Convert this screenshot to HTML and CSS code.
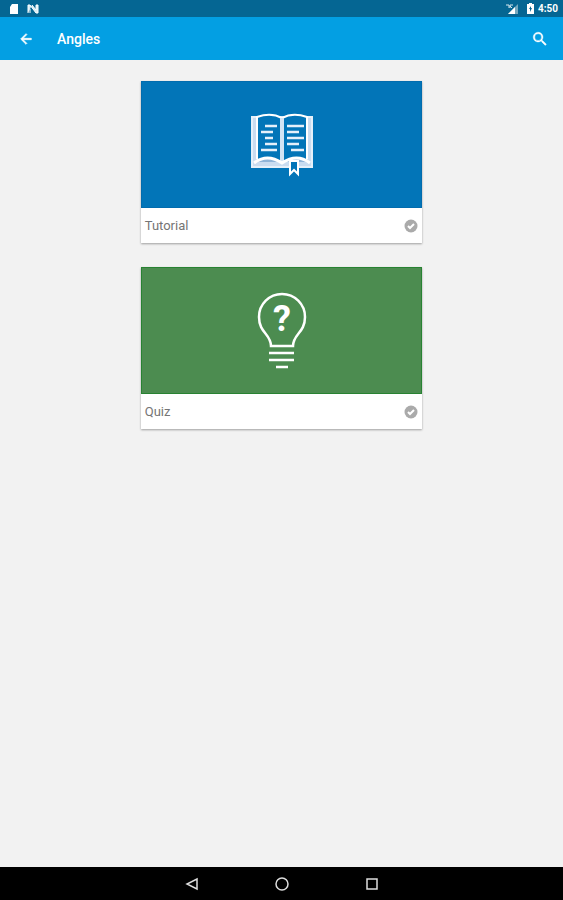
FILE: index.html
```html
<!DOCTYPE html>
<html lang="en">
<head>
    <meta charset="UTF-8">
    <meta name="viewport" content="width=device-width, initial-scale=1.0">
    <title>Angles</title>
    <link rel="stylesheet" href="styles.css">
</head>
<body>
    <div class="status-bar">
        <svg width="10" height="10" viewBox="0 0 10 10"><path d="M3 0h6v10H1V3z" fill="#fff"/></svg>
        <svg width="12" height="10" viewBox="0 0 12 10"><path d="M1 9V1h2l6 8h2V1H9v5L5 1M3 9V5" fill="#d9edf5" stroke="#fff"/></svg>
        <svg class="signal" width="13" height="12" viewBox="0 0 13 12"><path d="M0 2h3v3M4 5V2h3M6 5l-2-2" fill="none" stroke="#d5e6ed"/><path d="M12 1v10H2z" fill="#75a8be"/><path d="M9 4v7H2z" fill="#fff"/></svg>
        <svg width="7" height="11" viewBox="0 0 7 11"><path d="M2 0h3v1h2v10H0V1h2z" fill="#fff"/><path d="M4 3L2 6h1v3l2-4H4z" fill="#056693"/></svg>
        <span class="clock">4:50</span>
    </div>
    <header class="app-bar">
        <button class="icon-button" aria-label="Back">
            <svg width="16" height="16" viewBox="0 0 24 24"><path d="M20 11H7.8l5.6-5.6L12 4l-8 8 8 8 1.4-1.4L7.8 13H20z" fill="#fff" stroke="#fff"/></svg>
        </button>
        <h1>Angles</h1>
        <button class="icon-button" aria-label="Search">
            <svg width="18" height="18" viewBox="0 0 24 24"><path d="M15.5 14h-.8l-.3-.3A6.5 6.5 0 1 0 13.7 14.4l.3.3v.8l5 5 1.5-1.5zm-6 0a4.5 4.5 0 1 1 0-9 4.5 4.5 0 0 1 0 9z" fill="#fff" stroke="#fff" stroke-width=".5"/></svg>
        </button>
    </header>
    <main class="content">
        <a class="card" href="#tutorial">
            <div class="card-image tutorial">
                <svg width="64" height="64" viewBox="0 0 64 64" fill="none" stroke="#fff" stroke-width="2">
                    <path d="M1 3h61v52H1z" fill="#c9dcf0" stroke="none"/>
                    <path d="M8 4v43q13-4 22 3h4q9-7 22-3V4Q43-1 32 5 21-1 8 4z" fill="#0275b8" stroke="none"/>
                    <path d="M8 49q10-7 20 0zM36 49q10-7 20 0z" fill="#8fb4d8" stroke="none"/>
                    <path d="M8 4H2v50h60V4h-6" stroke="#e5f0fa"/>
                    <path d="M7 46V4q14-5 25 1 11-6 25-1v42"/>
                    <path d="M32 5v45" stroke="#d3e4f4" stroke-width="4"/>
                    <path d="M4 50q13-10 28 0 15-10 28 0" stroke-width="3"/>
                    <path d="M15 13h12M11 19h12M15 25h8M15 31h12M11 37h16M37 13h17M37 19h12M37 25h17M37 31h12M41 37h13" stroke="#e5f0fa" stroke-width="2.5"/>
                    <path d="M40 48v13l4-4 4 4V48z" fill="#0275b8"/>
                </svg>
            </div>
            <div class="card-footer">
                <span>Tutorial</span>
                <svg width="14" height="14" viewBox="0 0 14 14"><circle cx="7" cy="7" r="6.5" fill="#aaa"/><path d="M4 7l2 2 4-4" fill="none" stroke="#fff" stroke-width="2"/></svg>
            </div>
        </a>
        <a class="card" href="#quiz">
            <div class="card-image quiz">
                <svg width="52" height="80" viewBox="0 0 52 80" fill="none" stroke="#fff" stroke-width="2.5">
                    <path d="M15 55C15 43 3 42 3 26A23 23 0 0 1 49 26C49 42 37 43 37 55z"/>
                    <path d="M13 62h25M13 69h25M20 76h12"/>
                    <text class="mark" x="26" y="40" text-anchor="middle">?</text>
                </svg>
            </div>
            <div class="card-footer">
                <span>Quiz</span>
                <svg width="14" height="14" viewBox="0 0 14 14"><circle cx="7" cy="7" r="6.5" fill="#aaa"/><path d="M4 7l2 2 4-4" fill="none" stroke="#fff" stroke-width="2"/></svg>
            </div>
        </a>
    </main>
    <nav class="nav-bar">
        <button class="icon-button" aria-label="Back">
            <svg width="14" height="14" viewBox="0 0 14 14"><path d="M12 2v10L2 7z" fill="none" stroke="#ddd" stroke-width="1.5"/></svg>
        </button>
        <button class="icon-button" aria-label="Home">
            <svg width="14" height="14" viewBox="0 0 14 14"><circle cx="7" cy="7" r="6" fill="none" stroke="#ddd" stroke-width="1.5"/></svg>
        </button>
        <button class="icon-button" aria-label="Recent apps">
            <svg width="14" height="14" viewBox="0 0 14 14"><path d="M2 2h10v10H2z" fill="none" stroke="#ddd" stroke-width="1.5"/></svg>
        </button>
    </nav>
</body>
</html>
```
FILE: styles.css
```css
* {
    box-sizing: border-box;
}

body {
    display: flex;
    flex-direction: column;
    min-height: 100vh;
    margin: 0;
    font-family: Roboto, sans-serif;
    background-color: #f2f2f2;
}

svg {
    display: block;
}

.status-bar {
    display: flex;
    align-items: center;
    gap: 8px;
    height: 17px;
    padding: 0 5px 0 9px;
    background-color: #056693;
    color: #ffffff;
}

.signal {
    margin-left: auto;
}

.clock {
    margin-left: -4px;
    font-size: 10px;
    font-weight: 700;
}

.app-bar {
    display: flex;
    align-items: center;
    height: 43px;
    padding: 0 14px 0 18px;
    background-color: #039fe3;
}

.app-bar h1 {
    flex: 1;
    margin: 0 0 0 23px;
    color: #ffffff;
    font-size: 14px;
    font-weight: 500;
}

.icon-button {
    padding: 0;
    border: none;
    background: none;
    cursor: pointer;
}

.content {
    display: flex;
    flex: 1;
    flex-direction: column;
    align-items: center;
    gap: 24px;
    padding: 21px 0;
}

.card {
    width: 50%;
    background-color: #ffffff;
    box-shadow: 0 1px 2px rgba(0, 0, 0, 0.35);
    text-decoration: none;
}

.card-image {
    display: flex;
    align-items: center;
    justify-content: center;
    height: 127px;
}

.tutorial {
    background-color: #0275b8;
    border: 1px solid #026cae;
}

.quiz {
    background-color: #4c8c50;
    border: 1px solid #288232;
}

.mark {
    fill: #ffffff;
    stroke: none;
    font-size: 36px;
    font-weight: 700;
}

.card-footer {
    display: flex;
    align-items: center;
    justify-content: space-between;
    height: 35px;
    padding: 0 4px;
    color: #757575;
    font-size: 13px;
}

.nav-bar {
    display: flex;
    align-items: center;
    justify-content: center;
    gap: 76px;
    height: 33px;
    background-color: #000000;
}
```
